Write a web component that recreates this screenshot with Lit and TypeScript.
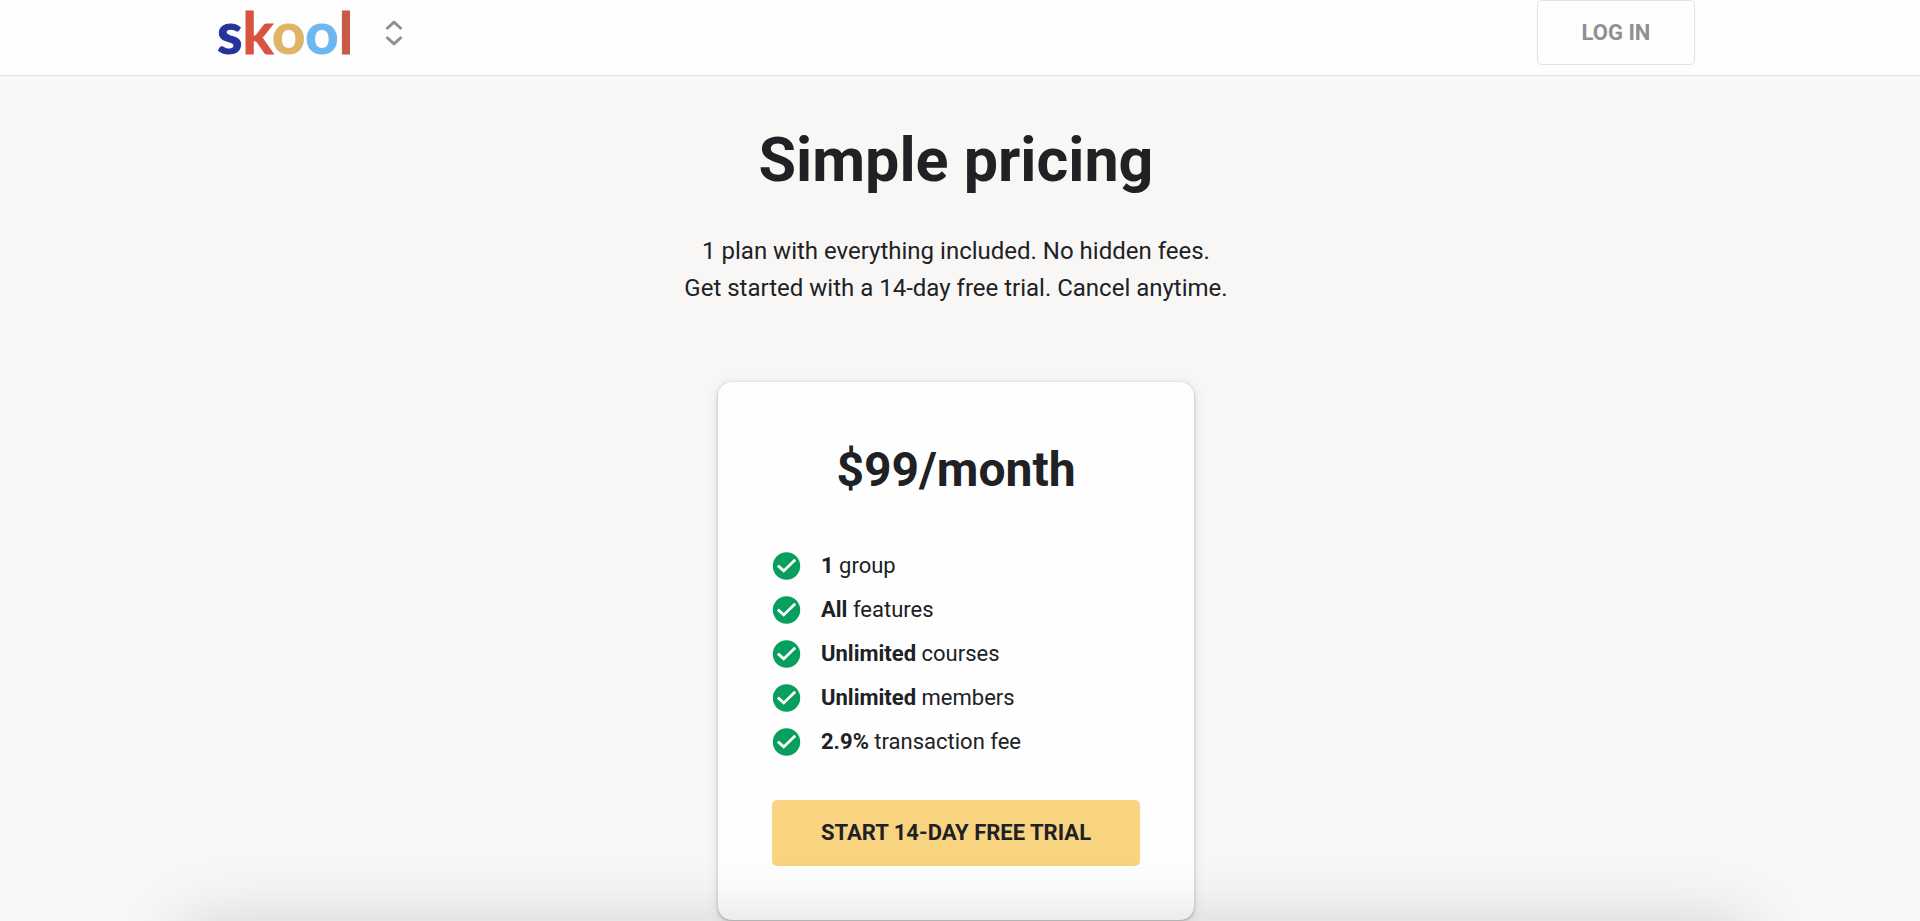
import { LitElement, html, css } from "lit";
import { customElement, property } from "lit/decorators.js";

interface Feature {
  lead: string;
  rest: string;
}

const FEATURES: Feature[] = [
  { lead: "1", rest: "group" },
  { lead: "All", rest: "features" },
  { lead: "Unlimited", rest: "courses" },
  { lead: "Unlimited", rest: "members" },
  { lead: "2.9%", rest: "transaction fee" },
];

@customElement("site-header")
export class SiteHeader extends LitElement {
  static styles = css`
    :host {
      display: block;
      background: #fefefe;
      border-bottom: 1px solid #e2e2e1;
      padding-right: 8px;
    }
    .inner {
      box-sizing: border-box;
      max-width: 1478px;
      height: 75px;
      margin: 0 auto;
      display: flex;
      align-items: flex-start;
      justify-content: space-between;
    }
    .brand {
      display: flex;
      align-items: center;
      gap: 32px;
    }
    .logo {
      padding-bottom: 2px;
      font: 700 58px/64px Lato, sans-serif;
      text-decoration: none;
    }
    .navy, .red, .gold, .sky, .brick { -webkit-text-stroke: 1px currentColor; }
    .navy { color: #25339b; }
    .red { color: #d75440; }
    .gold { color: #e0b467; }
    .sky { color: #6bb8f0; }
    .brick { color: #c65a46; }
    .switcher {
      display: flex;
      padding: 0;
      border: 0;
      background: none;
      cursor: pointer;
    }
    .login {
      box-sizing: border-box;
      width: 158px;
      height: 65px;
      border: 1px solid #e2e2e2;
      border-radius: 5px;
      background: #fefefe;
      color: #909090;
      font: 700 22px/30px Roboto, sans-serif;
      cursor: pointer;
    }
  `;

  render() {
    return html`
      <header class="inner">
        <div class="brand">
          <a class="logo" href="#" aria-label="skool"
            ><span class="navy">s</span><span class="red">k</span><span class="gold">o</span
            ><span class="sky">o</span><span class="brick">l</span></a
          >
          <button class="switcher" aria-label="Switch group">
            <svg width="18" height="26" viewBox="0 0 18 26" fill="none" stroke="#919191" stroke-width="3" stroke-linejoin="round">
              <path d="M1.5 9 9 2.2 16.500 9" />
              <path d="M1.500 17 9 23.800 16.500 17" />
            </svg>
          </button>
        </div>
        <button class="login">LOG IN</button>
      </header>
    `;
  }
}

@customElement("pricing-card")
export class PricingCard extends LitElement {
  @property({ type: String }) price = "";
  @property({ attribute: false }) features: Feature[] = [];

  static styles = css`
    :host {
      box-sizing: border-box;
      display: block;
      width: 476px;
      max-width: 100%;
      padding: 54px;
      border-radius: 14px;
      background: #fefefe;
      box-shadow: 0 1px 3px rgba(60, 64, 67, 0.35), 0 2px 12px rgba(60, 64, 67, 0.14);
    }
    .price {
      margin: 0;
      text-align: center;
      font-size: 48px;
      line-height: 68px;
      font-weight: 700;
    }
    .list {
      margin: 47px 0 0;
      padding: 0;
      list-style: none;
      display: grid;
      gap: 14px;
    }
    .item {
      display: flex;
      align-items: center;
      gap: 20px;
      font-size: 22px;
      line-height: 30px;
    }
    .tick {
      flex: none;
    }
    .cta {
      display: block;
      width: 100%;
      height: 66px;
      margin-top: 43px;
      padding: 0;
      border: 0;
      border-radius: 5px;
      background: #f8d481;
      color: #202124;
      font: 700 22px/30px Roboto, sans-serif;
      cursor: pointer;
    }
  `;

  render() {
    return html`
      <h2 class="price">${this.price}</h2>
      <ul class="list">
        ${this.features.map(
          (f) => html`
            <li class="item">
              <svg class="tick" width="29" height="28" viewBox="0 0 28 28" aria-hidden="true">
                <circle cx="14" cy="14" r="13.700" fill="#069f5e" />
                <path d="M5.400 13.600 11.200 18.900 22.700 7.700" fill="none" stroke="#fff" stroke-width="2.800" />
              </svg>
              <span><b>${f.lead}</b> ${f.rest}</span>
            </li>
          `
        )}
      </ul>
      <button class="cta">START 14-DAY FREE TRIAL</button>
    `;
  }
}

@customElement("app-root")
export class AppRoot extends LitElement {
  static styles = css`
    :host {
      display: block;
      min-height: 100vh;
      background: #f8f7f5;
      color: #202124;
      font-family: Roboto, sans-serif;
    }
    .main {
      display: flex;
      flex-direction: column;
      align-items: center;
      padding: 43px 8px 0 0;
    }
    .title {
      margin: 0;
      font-size: 61px;
      line-height: 82px;
      font-weight: 700;
    }
    .intro {
      margin: 32px 0 75px;
      text-align: center;
      font-size: 24px;
      line-height: 37px;
    }
    .shade {
      position: fixed;
      top: 100vh;
      left: 180px;
      right: 170px;
      height: 120px;
      border-radius: 24px;
      box-shadow: 0 0 64px rgba(0, 0, 0, 0.15);
      pointer-events: none;
    }
  `;

  render() {
    return html`
      <site-header></site-header>
      <main class="main">
        <h1 class="title">Simple pricing</h1>
        <p class="intro">
          1 plan with everything included. No hidden fees.<br />
          Get started with a 14-day free trial. Cancel anytime.
        </p>
        <pricing-card price="$99/month" .features=${FEATURES}></pricing-card>
      </main>
      <div class="shade"></div>
    `;
  }
}
